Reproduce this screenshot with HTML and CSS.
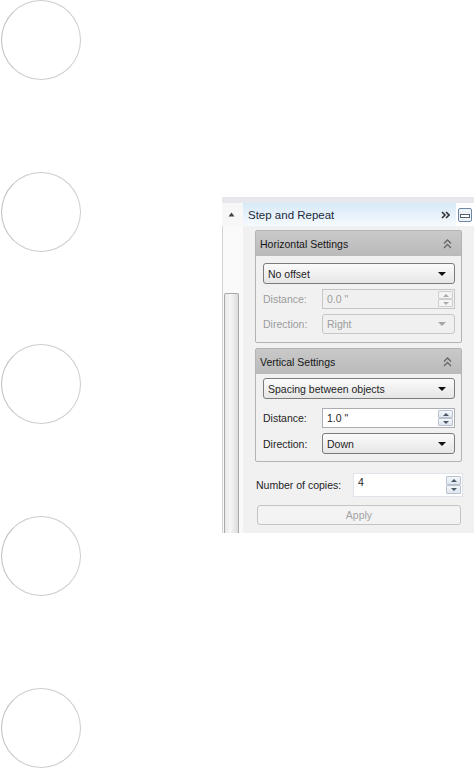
FILE: index.html
```html
<!DOCTYPE html>
<html lang="en">
<head>
<meta charset="UTF-8" />
<title>Step and Repeat</title>
<link rel="stylesheet" href="styles.css">
</head>
<body>
<div class="page">

<!-- binder holes -->
<div class="holes">
    <span class="hole"></span>
    <span class="hole"></span>
    <span class="hole"></span>
    <span class="hole"></span>
    <span class="hole"></span>
</div>

<!-- docker panel -->
<div class="panel">
    <div class="panel-top"></div>
    <div class="panel-title">
        <div class="rail-head">
            <svg width="7" height="5" viewBox="0 0 7 5"><path d="M0.5 4.5 L3.5 0.5 L6.5 4.5 Z" fill="#444"/></svg>
        </div>
        <div class="title-bar">
            <span class="title-text">Step and Repeat</span>
            <svg class="more" width="9" height="8" viewBox="0 0 9 8"><path d="M1 1 L4 4 L1 7 M5 1 L8 4 L5 7" fill="none" stroke="#333" stroke-width="1.6"/></svg>
        </div>
        <div class="min-btn">
            <svg width="14" height="14" viewBox="0 0 14 14">
                <rect x="0.5" y="0.5" width="13" height="13" rx="1.5" fill="#eef3f8" stroke="#6f87a3"/>
                <rect x="2.5" y="6.5" width="9" height="3" fill="#fff" stroke="#55606c"/>
            </svg>
        </div>
    </div>

    <div class="panel-body">
        <div class="rail"><div class="thumb"></div></div>

        <div class="content">
            <div class="group">
                <div class="group-head">
                    <span>Horizontal Settings</span>
                    <svg width="9" height="10" viewBox="0 0 9 10"><path d="M1 4.5 L4.5 1 L8 4.5 M1 9 L4.5 5.5 L8 9" fill="none" stroke="#666" stroke-width="1.3"/></svg>
                </div>
                <div class="group-body">
                    <div class="select tall">
                        <span>No offset</span>
                        <span class="arrow"></span>
                    </div>
                    <div class="field disabled">
                        <label>Distance:</label>
                        <div class="input">
                            <span>0.0 "</span>
                            <div class="spin"><span class="up"></span><span class="down"></span></div>
                        </div>
                    </div>
                    <div class="field disabled">
                        <label>Direction:</label>
                        <div class="select">
                            <span>Right</span>
                            <span class="arrow"></span>
                        </div>
                    </div>
                </div>
            </div>

            <div class="group second">
                <div class="group-head">
                    <span>Vertical Settings</span>
                    <svg width="9" height="10" viewBox="0 0 9 10"><path d="M1 4.5 L4.5 1 L8 4.5 M1 9 L4.5 5.5 L8 9" fill="none" stroke="#666" stroke-width="1.3"/></svg>
                </div>
                <div class="group-body">
                    <div class="select tall">
                        <span>Spacing between objects</span>
                        <span class="arrow"></span>
                    </div>
                    <div class="field spaced">
                        <label>Distance:</label>
                        <div class="input">
                            <span>1.0 "</span>
                            <div class="spin"><span class="up"></span><span class="down"></span></div>
                        </div>
                    </div>
                    <div class="field">
                        <label>Direction:</label>
                        <div class="select tall">
                            <span>Down</span>
                            <span class="arrow"></span>
                        </div>
                    </div>
                </div>
            </div>

            <div class="copies">
                <label>Number of copies:</label>
                <div class="input copies-input">
                    <span>4</span>
                    <div class="spin"><span class="up"></span><span class="down"></span></div>
                </div>
            </div>

            <button class="apply" disabled>Apply</button>
        </div>
    </div>
</div>

</div>
</body>
</html>
```

FILE: styles.css
```css
html, body {
    margin: 0;
    padding: 0;
    background: #ffffff;
}
body {
    width: 474px;
    height: 773px;
    overflow: hidden;
    font-family: "Liberation Sans", Arial, sans-serif;
    font-size: 10.5px;
    color: #1e1e1e;
}
.page {
    display: flex;
    align-items: flex-start;
}

/* 孔 */
.holes {
    width: 221px;
    padding-left: 1px;
    display: flex;
    flex-direction: column;
    gap: 92px;
    flex-shrink: 0;
}
.hole {
    display: block;
    width: 78px;
    height: 78px;
    border: 1.5px solid #cdcdcd;
    border-left-color: #bdbdbd;
    border-radius: 50%;
}

/* 面板 */
.panel {
    margin-top: 197px;
    width: 252px;
    flex-shrink: 0;
    overflow: hidden;
    background: #f1f1f1;
}
.panel-top {
    height: 6px;
    background: #e7e8ee;
}
.panel-title {
    display: flex;
    height: 23px;
    background: #ffffff;
}
.rail-head {
    width: 21px;
    display: flex;
    align-items: center;
    padding-left: 6px;
    box-sizing: border-box;
    background: #f7f7f7;
}
.title-bar {
    flex: 1;
    display: flex;
    align-items: center;
    justify-content: space-between;
    padding: 0 5px 0 5px;
    background: linear-gradient(to bottom, #d7e9f8, #e9f3fb 60%, #f6fafd);
}
.title-text {
    font-size: 11.5px;
    color: #1b2b40;
}
.more {
    margin-right: 1px;
}
.min-btn {
    width: 18px;
    display: flex;
    align-items: center;
    padding-left: 2px;
    box-sizing: border-box;
}

.panel-body {
    display: flex;
}
.rail {
    width: 21px;
    flex-shrink: 0;
    padding-left: 1px;
    box-sizing: border-box;
    background: #fafafa;
    border-left: 1px solid #d4d4d4;
}
.thumb {
    margin-top: 67px;
    width: 15px;
    height: 240px;
    box-sizing: border-box;
    border: 1px solid #a9a9a9;
    border-bottom: none;
    border-radius: 2px 2px 0 0;
    background: linear-gradient(to right, #e8e8e8, #f6f6f6 40%, #dcdcdc);
}
.content {
    flex: 1;
    padding: 4px 0 6px 12px;
}

/* 分组 */
.group {
    width: 207px;
    box-sizing: border-box;
    border: 1px solid #b3b3b3;
    border-radius: 2px;
}
.group.second {
    margin-top: 5px;
}
.group-head {
    height: 25px;
    display: flex;
    align-items: center;
    justify-content: space-between;
    padding: 0 9px 0 4px;
    background: linear-gradient(to bottom, #c9c9c9, #bababa);
    color: #161616;
    font-size: 10.5px;
}
.group-body {
    padding: 7px 6px 8px 7px;
    display: flex;
    flex-direction: column;
    gap: 5px;
}
.group.second .group-body {
    padding-top: 4px;
    padding-bottom: 7px;
}
.field.spaced {
    margin-top: 4px;
}

.select {
    height: 20px;
    flex-shrink: 0;
    box-sizing: border-box;
    display: flex;
    align-items: center;
    justify-content: space-between;
    padding: 0 8px 0 4px;
    border: 1px solid #7b7b7b;
    border-radius: 3px;
    background: linear-gradient(to bottom, #fbfbfb, #e6e6e6);
}
.select.tall {
    height: 21px;
}
.field .select {
    flex: 1;
}
.arrow {
    width: 0;
    height: 0;
    border-left: 4px solid transparent;
    border-right: 4px solid transparent;
    border-top: 4px solid #111;
}

.field {
    display: flex;
    align-items: center;
    flex-shrink: 0;
}
.field label {
    width: 59px;
    flex-shrink: 0;
}
.input {
    flex: 1;
    height: 20px;
    box-sizing: border-box;
    display: flex;
    justify-content: space-between;
    padding: 0 1px 0 4px;
    border: 1px solid #abadb3;
    background: #ffffff;
}
.input > span {
    padding-top: 3px;
}
.spin {
    width: 15px;
    display: flex;
    flex-direction: column;
    padding: 1px 0;
}
.spin span {
    flex: 1;
    display: flex;
    align-items: center;
    justify-content: center;
    border: 1px solid #b8c3cf;
    background: linear-gradient(to bottom, #f4f7fa, #dfe6ee);
    border-radius: 1px;
}
.spin .up::after,
.spin .down::after {
    content: "";
    width: 0;
    height: 0;
    border-left: 3px solid transparent;
    border-right: 3px solid transparent;
}
.spin .up::after {
    border-bottom: 3px solid #4a5866;
}
.spin .down::after {
    border-top: 3px solid #4a5866;
}

/* 禁用状态 */
.field.disabled {
    color: #9c9c9c;
}
.field.disabled .input,
.field.disabled .select {
    border-color: #c6c6c6;
    background: #f0f0f0;
}
.field.disabled .arrow {
    border-top-color: #a5a5a5;
}
.field.disabled .spin span {
    border-color: #cfcfcf;
    background: #f4f4f4;
}
.field.disabled .spin .up::after {
    border-bottom-color: #aaa;
}
.field.disabled .spin .down::after {
    border-top-color: #aaa;
}

/* 份数 */
.copies {
    display: flex;
    align-items: center;
    margin-top: 11px;
}
.copies label {
    width: 97px;
    flex-shrink: 0;
    padding-left: 1px;
}
.copies-input {
    flex: none;
    width: 110px;
    height: 24px;
    border-color: #e2e3ea;
}
.copies-input > span {
    padding-top: 2px;
}
.copies-input .spin {
    padding: 2px 0;
}

.apply {
    display: block;
    margin: 8px 0 0 2px;
    width: 204px;
    height: 20px;
    border: 1px solid #c4c4c4;
    border-radius: 3px;
    background: #f3f3f3;
    color: #a3a3a3;
    font-family: inherit;
    font-size: 10.5px;
    padding: 0;
}
```
